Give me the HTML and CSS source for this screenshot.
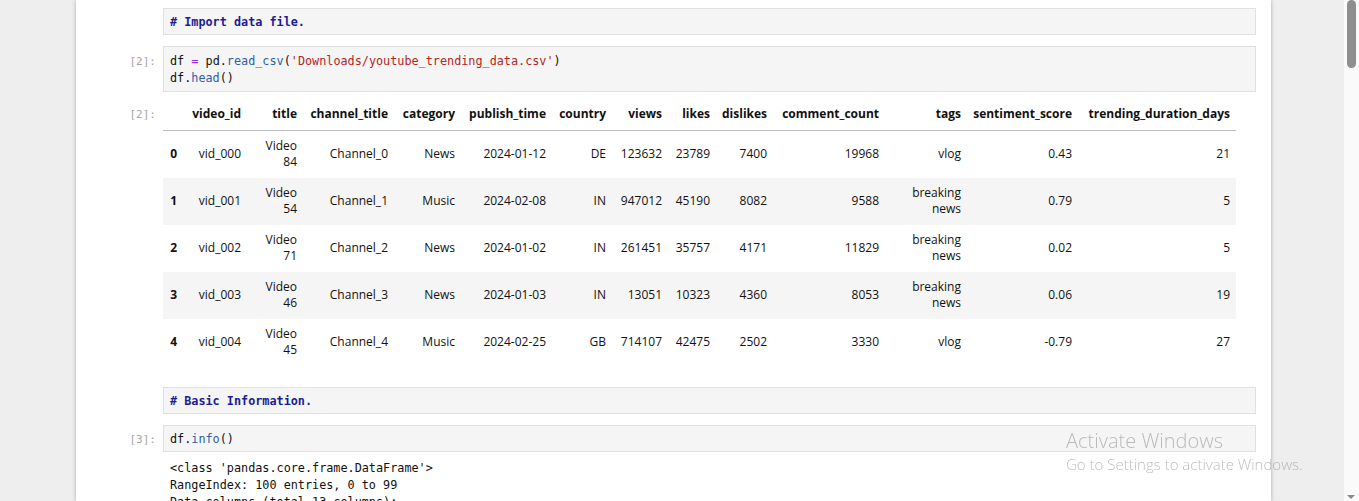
FILE: index.html
```html
<!DOCTYPE html>
<html>
<head>
<meta charset="utf-8">
<link rel="stylesheet" href="styles.css">
</head>
<body>
<div class="screen">
  <div class="viewport">
    <div class="notebook">
      <div class="cell">
        <div class="prompt"></div>
        <div class="input"><span class="cm-header"># Import data file.</span></div>
      </div>

      <div class="cell">
        <div class="prompt multi-prompt">[2]:</div>
        <div class="input multi">df <span class="op">=</span> pd.<span class="prop">read_csv</span>(<span class="str">'Downloads/youtube_trending_data.csv'</span>)<br>df.<span class="prop">head</span>()</div>
      </div>
      <div class="output-row table-out">
        <div class="prompt out-prompt">[2]:</div>
        <div class="output">
          <table class="dataframe">
            <colgroup>
              <col class="w20"><col class="w64"><col class="w56"><col class="w91"><col class="w67"><col class="w91"><col class="w60"><col class="w56"><col class="w48"><col class="w57"><col class="w112"><col class="w82"><col class="w111"><col class="w158">
            </colgroup>
            <thead>
              <tr><th></th><th>video_id</th><th>title</th><th>channel_title</th><th>category</th><th>publish_time</th><th>country</th><th>views</th><th>likes</th><th>dislikes</th><th>comment_count</th><th>tags</th><th>sentiment_score</th><th>trending_duration_days</th></tr>
            </thead>
            <tbody>
              <tr><th>0</th><td>vid_000</td><td>Video<br>84</td><td>Channel_0</td><td>News</td><td>2024-01-12</td><td>DE</td><td>123632</td><td>23789</td><td>7400</td><td>19968</td><td>vlog</td><td>0.43</td><td>21</td></tr>
              <tr><th>1</th><td>vid_001</td><td>Video<br>54</td><td>Channel_1</td><td>Music</td><td>2024-02-08</td><td>IN</td><td>947012</td><td>45190</td><td>8082</td><td>9588</td><td>breaking<br>news</td><td>0.79</td><td>5</td></tr>
              <tr><th>2</th><td>vid_002</td><td>Video<br>71</td><td>Channel_2</td><td>News</td><td>2024-01-02</td><td>IN</td><td>261451</td><td>35757</td><td>4171</td><td>11829</td><td>breaking<br>news</td><td>0.02</td><td>5</td></tr>
              <tr><th>3</th><td>vid_003</td><td>Video<br>46</td><td>Channel_3</td><td>News</td><td>2024-01-03</td><td>IN</td><td>13051</td><td>10323</td><td>4360</td><td>8053</td><td>breaking<br>news</td><td>0.06</td><td>19</td></tr>
              <tr><th>4</th><td>vid_004</td><td>Video<br>45</td><td>Channel_4</td><td>Music</td><td>2024-02-25</td><td>GB</td><td>714107</td><td>42475</td><td>2502</td><td>3330</td><td>vlog</td><td>-0.79</td><td>27</td></tr>
            </tbody>
          </table>
        </div>
      </div>

      <div class="cell">
        <div class="prompt"></div>
        <div class="input"><span class="cm-header"># Basic Information.</span></div>
      </div>

      <div class="cell">
        <div class="prompt">[3]:</div>
        <div class="input">df.<span class="prop">info</span>()</div>
      </div>
      <div class="output-row stream-out">
        <div class="prompt"></div>
        <pre class="stream">&lt;class 'pandas.core.frame.DataFrame'&gt;
RangeIndex: 100 entries, 0 to 99
Data columns (total 13 columns):</pre>
      </div>
    </div>
  </div>
  <div class="scrollbar">
    <div class="thumb"></div>
    <div class="arrow"></div>
  </div>
</div>
<div class="watermark">
  <div class="wm-title">Activate Windows</div>
  <div class="wm-sub">Go to Settings to activate Windows.</div>
</div>
</body>
</html>
```
FILE: styles.css
```css
html, body {
  margin: 0;
  padding: 0;
  height: 100%;
  overflow: hidden;
}
body {
  background: #eeeeee;
  font-family: "Open Sans", "Noto Sans", sans-serif;
  color: #1a1a1a;
}
.screen {
  display: flex;
  height: 501px;
}
.viewport {
  flex: 1;
  overflow: hidden;
}
.notebook {
  margin-left: 76px;
  width: 1195px;
  height: 100%;
  background: #ffffff;
  box-shadow: 0 0 4px rgba(0, 0, 0, 0.28);
  padding-top: 8px;
  box-sizing: border-box;
}
.cell {
  display: flex;
  margin-bottom: 11px;
}
.prompt {
  width: 87px;
  flex: none;
  box-sizing: border-box;
  padding-right: 7px;
  padding-top: 6px;
  text-align: right;
  font-family: "DejaVu Sans Mono", monospace;
  font-size: 11px;
  line-height: 17px;
  color: #a6a6a6;
}
.multi-prompt {
  padding-top: 7px;
}
.input {
  width: 1093px;
  box-sizing: border-box;
  background: #f5f5f5;
  border: 1px solid #e0e0e0;
  padding: 5px 6px 3px;
  font-family: "DejaVu Sans Mono", monospace;
  font-size: 11.8px;
  line-height: 17px;
  color: #111;
}
.input.multi {
  padding-top: 6px;
  padding-bottom: 4px;
}
.cm-header {
  color: #1c1c96;
  font-weight: bold;
}
.op { color: #9b2fd6; }
.prop { color: #2f5fa8; }
.str { color: #b3261e; }

.output-row {
  display: flex;
  margin-top: -11px;
}
.table-out {
  padding-top: 7px;
  padding-bottom: 21px;
}
.stream-out {
  padding-top: 8px;
}
.out-prompt {
  padding-top: 7px;
}
.output {
  flex: none;
}
table.dataframe {
  table-layout: fixed;
  width: 1073px;
  border-collapse: collapse;
  border-spacing: 0;
  font-size: 12px;
  line-height: 16px;
  color: #111;
}
col.w20 { width: 20px; }
col.w48 { width: 48px; }
col.w56 { width: 56px; }
col.w57 { width: 57px; }
col.w60 { width: 60px; }
col.w64 { width: 64px; }
col.w67 { width: 67px; }
col.w82 { width: 82px; }
col.w91 { width: 91px; }
col.w111 { width: 111px; }
col.w112 { width: 112px; }
col.w158 { width: 158px; }

.dataframe th, .dataframe td {
  padding: 7px 6px 8px;
  text-align: right;
  vertical-align: middle;
  white-space: nowrap;
  overflow: visible;
}
.dataframe thead th {
  font-weight: bold;
  border-bottom: 1px solid #bdbdbd;
}
.dataframe tbody th {
  font-weight: bold;
}
.dataframe tbody tr:nth-child(odd) {
  background: #ffffff;
}
.dataframe tbody tr:nth-child(even) {
  background: #f5f5f5;
}
.stream {
  margin: 0;
  padding: 0 7px;
  font-family: "DejaVu Sans Mono", monospace;
  font-size: 11.8px;
  line-height: 17px;
  color: #111;
}
.scrollbar {
  width: 15px;
  flex: none;
  background: #fafafa;
  position: relative;
}
.thumb {
  position: absolute;
  left: 3px;
  top: 0;
  width: 9px;
  height: 68px;
  border-radius: 5px;
  background: #8e8e8e;
}
.arrow {
  position: absolute;
  left: 3px;
  bottom: 2px;
  width: 0;
  height: 0;
  border-left: 4px solid transparent;
  border-right: 4px solid transparent;
  border-top: 4px solid #8a8a8a;
}
.watermark {
  position: fixed;
  left: 1066px;
  top: 427px;
  color: rgba(150, 150, 150, 0.62);
  font-family: "Open Sans", "Noto Sans", sans-serif;
  pointer-events: none;
}
.wm-title {
  font-size: 20px;
  line-height: 27px;
  font-weight: 300;
}
.wm-sub {
  font-size: 15px;
  line-height: 20px;
  font-weight: 300;
}
```
